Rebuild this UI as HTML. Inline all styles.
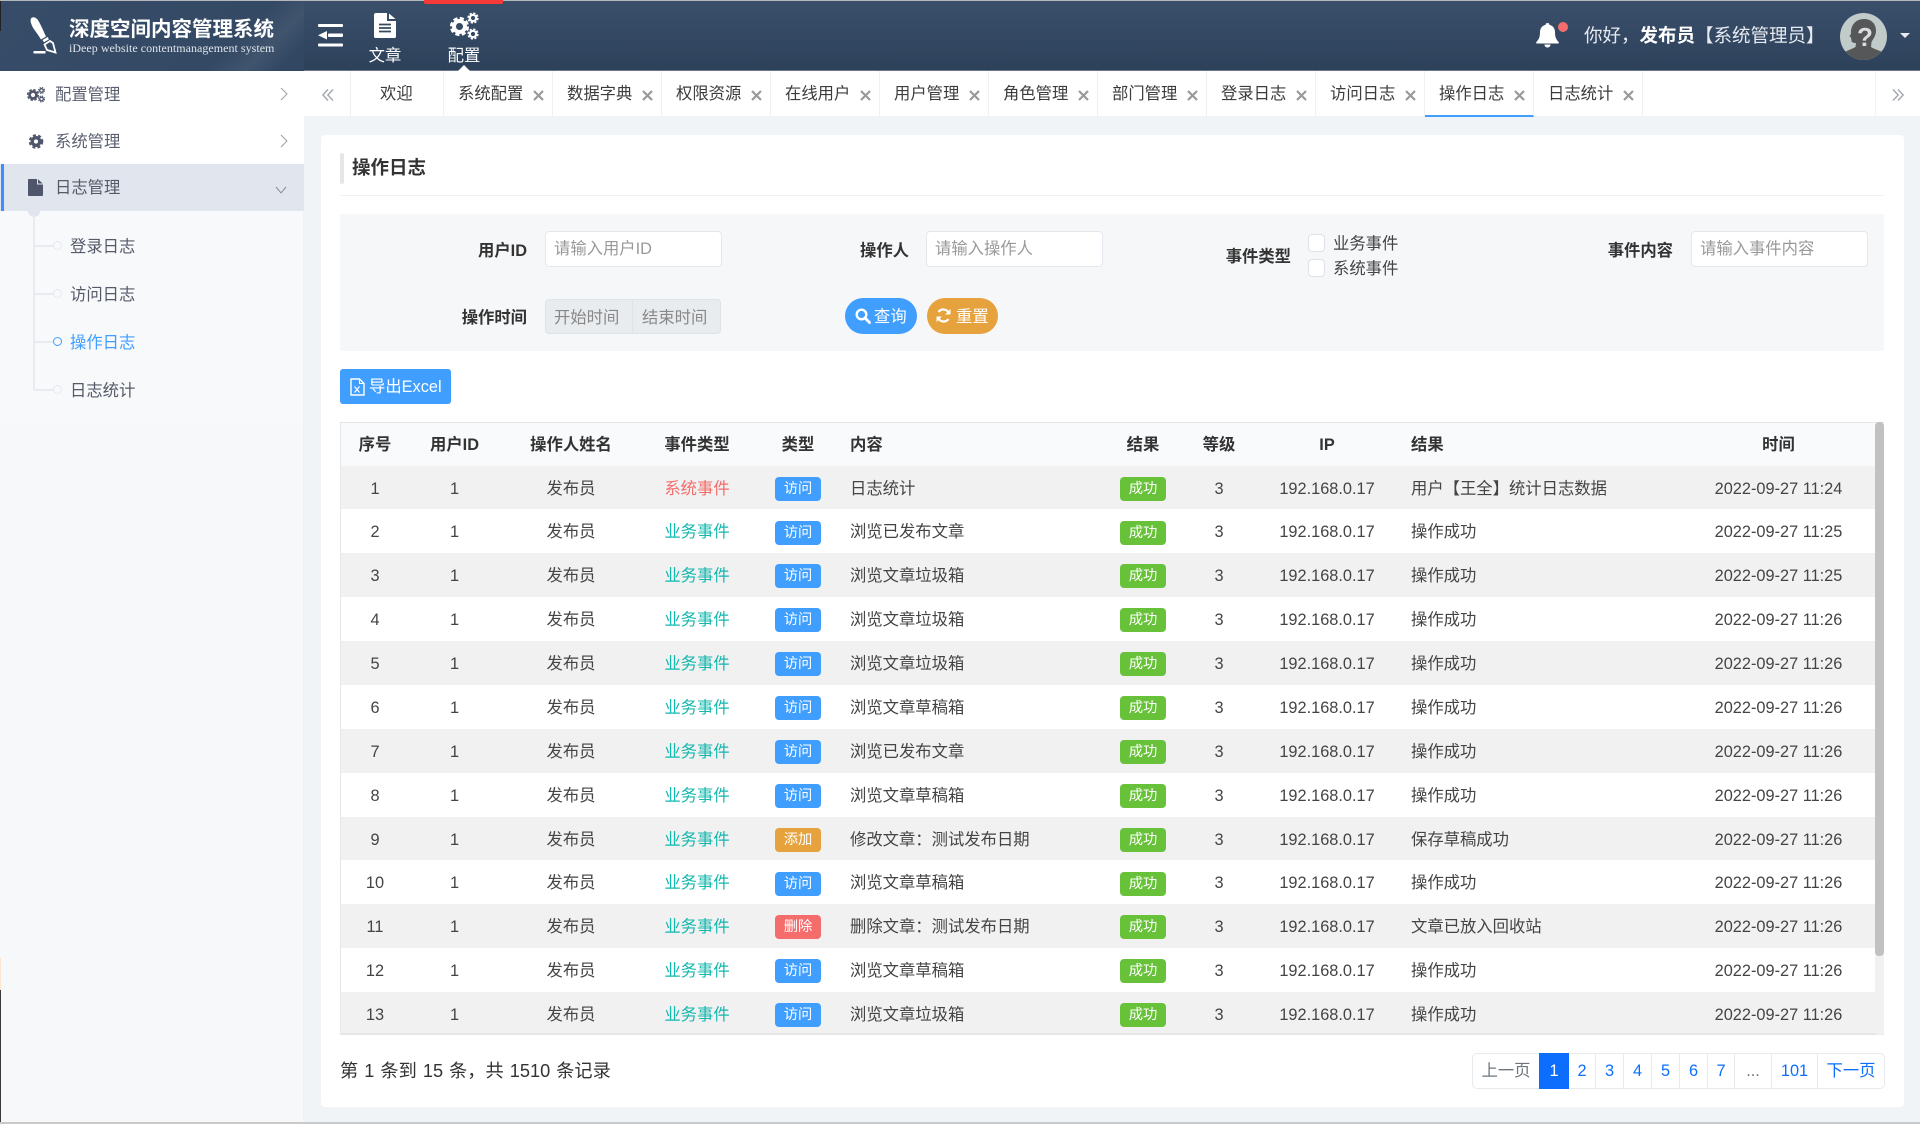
<!DOCTYPE html>
<html lang="zh">
<head>
<meta charset="utf-8">
<title>操作日志</title>
<style>
*{box-sizing:border-box;margin:0;padding:0}
html,body{width:1920px;height:1124px;overflow:hidden;background:#f1f4f7}
body{position:relative;font:16.33px/1.2 "Liberation Sans","Noto Sans CJK SC",sans-serif;color:#444}
.a{position:absolute;white-space:nowrap}
svg{position:absolute;display:block;overflow:visible}
#hd{left:0;top:0;width:1920px;height:71px;background:linear-gradient(#3a4f6a,#2d415b);border-top:1px solid #b5b8bb;border-bottom:1px solid #6b7788}
#logo{left:0;top:0;width:304px;height:70px;background:linear-gradient(135deg,#374c68 0%,#344964 74%,#40546e 84%,#324762 93%)}
.nav{color:#fff;width:60px;text-align:center;top:46px;line-height:20px}
#side{left:0;top:71px;width:304px;height:1052px;background:#f6f8fa;border-right:1px solid #f0f2f5}
.mi{left:0;width:304px;height:47px;line-height:49px;padding-left:55px;color:#5b6070;background:#fff}
.sub{left:70px;line-height:24px;color:#555a68}
.ln{position:absolute;background:#e8ebf1}
.dot{position:absolute;left:53px;width:9px;height:9px;border-radius:50%;background:#f8f9fb;border:1px solid #e5e8ee}
#tabs{left:304px;top:71px;width:1616px;height:46px;background:#fff;border-bottom:1px solid #f0f2f5}
.tab{top:71px;height:46px;width:109px;border-right:1px solid #eef0f3;line-height:47px;padding-left:14px;color:#3c3c3c}
.tab svg{left:89px;top:19px}
#card{left:321px;top:135px;width:1583px;height:972px;background:#fff;border-radius:4px}
.lb{font-weight:700;color:#333;text-align:right;line-height:24px}
.ip{height:36px;width:177px;background:#fff;border:1px solid #e4e7ed;border-radius:4px;line-height:35px;padding-left:8px;color:#999}
.cb{left:1308px;width:17px;height:18px;border:1px solid #dfe2e7;border-radius:4px;background:#fff}
.btn{color:#fff;line-height:38px}
#tb{left:340px;top:422px;width:1544px;height:613px;overflow:hidden;border:1px solid #e5e6ea;border-right:0;border-bottom:2px solid #e5e6e8;background:#fff}
.r{position:absolute;left:0;width:1534px;height:43.88px;line-height:46px;display:grid;grid-template-columns:68px 91px 142px 110px 92px 256px 86px 66px 150px 280px 193px}
.r>span{text-align:center;white-space:nowrap;display:block}
.r>.l{text-align:left}
.r .c6{padding-left:6px}
.r .c10{padding-left:9px}
.th{top:0;height:43px;background:#f9fafb;font-weight:700;color:#333;line-height:44px}
.o{background:#f1f1f1}
.w{background:#fff}
.bz{color:#14b8ae}
.xt{color:#f56c6c}
i.t{font-style:normal;display:inline-block;width:46px;height:24px;line-height:24px;border-radius:4px;font-size:14.3px;color:#fff;vertical-align:middle;margin-top:-1px}
.bl{background:#409eff}.gr{background:#67c23a}.or{background:#e6a23c}.rd{background:#f56c6c}
#pg{left:1472px;top:1053px;width:413px;height:36px;border:1px solid #e7eaee;border-radius:5px;background:#fff}
.p{top:1054px;height:34px;line-height:35px;text-align:center;color:#0d6efd;border-right:1px solid #e7eaee}
</style>
</head>
<body>
<svg width="0" height="0" style="position:absolute"><defs>
<symbol id="x" viewBox="0 0 11 11"><path d="M1 1L10 10M10 1L1 10" stroke="#999" stroke-width="2.2" fill="none"/></symbol>
</defs></svg>

<div class="a" id="hd"></div>
<div class="a" id="logo" style="top:1px"></div>
<div class="a" style="left:0;top:1px;width:1px;height:30px;background:#222"></div>

<!-- logo -->
<svg style="left:0;top:0" width="70" height="70" viewBox="0 0 70 70">
<path d="M31 18.5c2-2.500 5.500-1 7.500 2.500 3.500 6 5.500 11.500 7.500 15.500l-5 3C38 34 33 29 31.500 24.500c-.6-2-1.500-4-.5-6z" fill="#fff"/>
<path d="M42.500 40l5-3 1.500 2.200-5 3z" fill="#fff"/>
<path d="M44.500 44.500l5.500-3.500 3 2 2.500 9.500-8.500-2.500z" fill="none" stroke="#fff" stroke-width="1.800"/>
<path d="M33.500 51h12v2.500h-12z" fill="#fff"/>
</svg>
<div class="a" style="left:69px;top:17px;font-size:20.500px;font-weight:700;color:#fff;line-height:26px">深度空间内容管理系统</div>
<div class="a" style="left:69px;top:41px;font:12px/14px 'Liberation Serif',serif;color:#dfe4ea;letter-spacing:.03px">iDeep website contentmanagement system</div>

<!-- outdent -->
<svg style="left:318px;top:24px" width="25" height="23" viewBox="0 0 25 23">
<rect x="0" y="0" width="25" height="3" rx="1" fill="#fff"/><rect x="10" y="9.500" width="15" height="3.500" rx="1" fill="#fff"/><rect x="0" y="19.500" width="25" height="3" rx="1" fill="#fff"/><path d="M0 11.200L9 7v8.500z" fill="#fff"/>
</svg>
<!-- doc -->
<svg style="left:374px;top:13px" width="22" height="25" viewBox="0 0 22 25">
<path d="M2 0h11v8h9v15.500a1.500 1.500 0 0 1-1.500 1.500H1.500A1.500 1.500 0 0 1 0 23.500V2a2 2 0 0 1 2-2zM15 .5L21.500 6H15z" fill="#fff"/>
<path d="M5 11.500h12M5 15h12M5 18.500h12" stroke="#34485f" stroke-width="1.700"/>
</svg>
<!-- gears -->
<svg style="left:450px;top:12px" width="29" height="30" viewBox="0 0 29 30">
<circle cx="9.500" cy="14.500" r="5.500" fill="none" stroke="#fff" stroke-width="4"/><circle cx="9.500" cy="14.500" r="8.400" fill="none" stroke="#fff" stroke-width="2.400" stroke-dasharray="4.200 2.400"/>
<circle cx="23" cy="6" r="3.200" fill="none" stroke="#fff" stroke-width="2.200"/><circle cx="23" cy="6" r="4.900" fill="none" stroke="#fff" stroke-width="1.500" stroke-dasharray="2.300 1.550"/>
<circle cx="23" cy="22" r="3.200" fill="none" stroke="#fff" stroke-width="2.200"/><circle cx="23" cy="22" r="4.900" fill="none" stroke="#fff" stroke-width="1.500" stroke-dasharray="2.300 1.550"/>
</svg>
<div class="a nav" style="left:355px">文章</div>
<div class="a nav" style="left:434px">配置</div>
<div class="a" style="left:424px;top:0;width:79px;height:4px;background:#f63a3a;border-radius:0 0 2px 2px"></div>
<svg style="left:458px;top:65px" width="12" height="6"><path d="M0 6L6 0l6 6z" fill="#fff"/></svg>

<!-- bell -->
<svg style="left:1536px;top:23px" width="23" height="25" viewBox="0 0 23 25">
<path d="M11.500 0c1.200 0 2 .8 2 1.900 3.500.8 5.500 3.600 5.500 7.300 0 5.300 1.600 7.700 3.700 9.800v1.500H.3V19c2.100-2.100 3.700-4.500 3.700-9.800 0-3.700 2-6.500 5.500-7.300C9.500.8 10.300 0 11.500 0zM8.500 21.500h6c0 1.800-1.300 3-3 3s-3-1.200-3-3z" fill="#fff"/>
</svg>
<div class="a" style="left:1558px;top:22px;width:10px;height:10px;border-radius:50%;background:#f56c6c"></div>
<div class="a" style="left:1584px;top:25px;font-size:18.500px;line-height:22px;color:#e6eaf0">你好，<b style="color:#fff">发布员</b>【系统管理员】</div>
<!-- avatar -->
<svg style="left:1840px;top:13px" width="47" height="47" viewBox="0 0 47 47">
<defs><clipPath id="cp"><circle cx="23.500" cy="23.500" r="23.500"/></clipPath></defs>
<g clip-path="url(#cp)"><rect width="47" height="47" fill="#c1cbca"/>
<path d="M24 6c7.500 0 12 5 12 11.500 0 5.500-3 8.500-4.500 11.500l-.5 5c4 3 11 3.500 16 8v6H0v-6c5-4 11-5.500 15.500-8l.5-4c-2.500 0-4.500-.5-4.500-2.500l-.5-3-1.500-1 1.500-3c-.5-8 4.500-14.500 13-14.500z" fill="#565759"/>
<text x="25" y="33" font-family="Liberation Sans" font-weight="700" font-size="26" text-anchor="middle" fill="#d9dedd">?</text></g>
</svg>
<svg style="left:1900px;top:33px" width="10" height="5"><path d="M0 0h10L5 5z" fill="#e8ecf0"/></svg>

<!-- sidebar -->
<div class="a" id="side"></div>
<div class="a" style="left:0;top:211px;width:303px;height:214px;background:#f8f9fb"></div>
<div class="a mi" style="top:71px">配置管理</div>
<div class="a mi" style="top:118px">系统管理</div>
<div class="a mi" style="top:164px;background:#e1e5ed;color:#555a68">日志管理</div>
<div class="a" style="left:1px;top:164px;width:3px;height:47px;background:#3c8dff"></div>
<svg style="left:27px;top:87px" width="18" height="15" viewBox="0 0 18 15" fill="none">
<circle cx="6" cy="8" r="3.400" stroke="#4f566b" stroke-width="2.600"/><circle cx="6" cy="8" r="5.300" stroke="#4f566b" stroke-width="1.500" stroke-dasharray="2.600 1.570"/>
<circle cx="14.500" cy="3.500" r="1.800" stroke="#4f566b" stroke-width="1.300"/><circle cx="14.500" cy="3.500" r="3" stroke="#4f566b" stroke-width="1" stroke-dasharray="1.400 .95"/>
<circle cx="14.500" cy="12" r="1.800" stroke="#4f566b" stroke-width="1.300"/><circle cx="14.500" cy="12" r="3" stroke="#4f566b" stroke-width="1" stroke-dasharray="1.400 .95"/>
</svg>
<svg style="left:28px;top:134px" width="16" height="15" viewBox="0 0 16 15" fill="none">
<circle cx="8" cy="7.500" r="3.800" stroke="#4f566b" stroke-width="3.400"/><circle cx="8" cy="7.500" r="6.300" stroke="#4f566b" stroke-width="2" stroke-dasharray="3 2.280"/>
</svg>
<svg style="left:28px;top:179px" width="15" height="17" viewBox="0 0 15 17">
<path d="M1 0h8v5.500h6V16a1 1 0 0 1-1 1H1a1 1 0 0 1-1-1V1a1 1 0 0 1 1-1zM10 .3L14.700 4.500H10z" fill="#4f566b"/>
</svg>
<svg style="left:280px;top:87px" width="8" height="14" fill="none"><path d="M1 1l6 6-6 6" stroke="#9a9ea6" stroke-width="1"/></svg>
<svg style="left:280px;top:134px" width="8" height="14" fill="none"><path d="M1 1l6 6-6 6" stroke="#9a9ea6" stroke-width="1"/></svg>
<svg style="left:275px;top:186px" width="12" height="8" fill="none"><path d="M1 1l5 6 5-6" stroke="#8a8f98" stroke-width="1"/></svg>
<div class="a" style="left:28px;top:211px;width:12px;height:6px;background:#e1e5ed;border-radius:0 0 6px 6px"></div>
<div class="ln" style="left:33px;top:215px;width:2px;height:175px"></div>
<div class="ln" style="left:33px;top:245px;width:20px;height:2px"></div>
<div class="ln" style="left:33px;top:293px;width:20px;height:2px"></div>
<div class="ln" style="left:33px;top:341px;width:20px;height:2px"></div>
<div class="ln" style="left:33px;top:389px;width:20px;height:2px"></div>
<div class="dot" style="top:241px"></div>
<div class="dot" style="top:289px"></div>
<div class="dot" style="top:337px;border-color:#409eff"></div>
<div class="dot" style="top:385px"></div>
<div class="a sub" style="top:235px">登录日志</div>
<div class="a sub" style="top:283px">访问日志</div>
<div class="a sub" style="top:331px;color:#409eff">操作日志</div>
<div class="a sub" style="top:379px">日志统计</div>
<div class="a" style="left:0;top:958px;width:1px;height:32px;background:#fde6cf"></div>
<div class="a" style="left:0;top:990px;width:1px;height:132px;background:#3a3a3a"></div>

<!-- tabs -->
<div class="a" id="tabs"></div>
<div class="a" style="left:304px;top:71px;width:47px;height:46px;border-right:1px solid #eef0f3"></div>
<svg style="left:322px;top:89px" width="12" height="12" fill="none"><path d="M6 .5L.8 6 6 11.500M11 .5L5.800 6 11 11.500" stroke="#a0a4ab" stroke-width="1.300"/></svg>
<div class="a" style="left:1875px;top:71px;width:45px;height:46px;border-left:1px solid #f2f3f6"></div>
<svg style="left:1892px;top:89px" width="12" height="12" fill="none"><path d="M1 .5L6.200 6 1 11.500M6 .5L11.200 6 6 11.500" stroke="#a0a4ab" stroke-width="1.300"/></svg>
<div class="a tab" style="left:351px;width:93px;padding-left:29px">欢迎</div>
<div class="a tab" style="left:444px">系统配置<svg width="11" height="11"><use href="#x"/></svg></div>
<div class="a tab" style="left:553px">数据字典<svg width="11" height="11"><use href="#x"/></svg></div>
<div class="a tab" style="left:662px">权限资源<svg width="11" height="11"><use href="#x"/></svg></div>
<div class="a tab" style="left:771px">在线用户<svg width="11" height="11"><use href="#x"/></svg></div>
<div class="a tab" style="left:880px">用户管理<svg width="11" height="11"><use href="#x"/></svg></div>
<div class="a tab" style="left:989px">角色管理<svg width="11" height="11"><use href="#x"/></svg></div>
<div class="a tab" style="left:1098px">部门管理<svg width="11" height="11"><use href="#x"/></svg></div>
<div class="a tab" style="left:1207px">登录日志<svg width="11" height="11"><use href="#x"/></svg></div>
<div class="a tab" style="left:1316px">访问日志<svg width="11" height="11"><use href="#x"/></svg></div>
<div class="a tab" style="left:1425px;border-bottom:2px solid #409eff">操作日志<svg width="11" height="11"><use href="#x"/></svg></div>
<div class="a tab" style="left:1534px">日志统计<svg width="11" height="11"><use href="#x"/></svg></div>

<!-- card -->
<div class="a" id="card"></div>
<div class="a" style="left:340px;top:153px;width:4px;height:31px;background:#e5e6e8;border-radius:2px"></div>
<div class="a" style="left:352px;top:156px;font-size:18.500px;font-weight:700;color:#333;line-height:24px">操作日志</div>
<div class="a" style="left:340px;top:195px;width:1544px;height:1px;background:#eef0f2"></div>
<div class="a" style="left:340px;top:214px;width:1544px;height:137px;background:#f6f7f9"></div>

<div class="a lb" style="left:427px;width:100px;top:239px">用户ID</div>
<div class="a ip" style="left:545px;top:231px">请输入用户ID</div>
<div class="a lb" style="left:809px;width:100px;top:239px">操作人</div>
<div class="a ip" style="left:926px;top:231px">请输入操作人</div>
<div class="a lb" style="left:1191px;width:100px;top:245px">事件类型</div>
<div class="a cb" style="top:234px"></div>
<div class="a cb" style="top:259px"></div>
<div class="a" style="left:1333px;top:232px;line-height:24px">业务事件</div>
<div class="a" style="left:1333px;top:257px;line-height:24px">系统事件</div>
<div class="a lb" style="left:1573px;width:100px;top:239px">事件内容</div>
<div class="a ip" style="left:1691px;top:231px">请输入事件内容</div>

<div class="a lb" style="left:427px;width:100px;top:306px">操作时间</div>
<div class="a" style="left:545px;top:299px;width:176px;height:35px;background:#e9ecef;border:1px solid #dfe2e6;border-radius:4px"></div>
<div class="a" style="left:632px;top:299px;width:1px;height:35px;background:#dfe2e6"></div>
<div class="a" style="left:554px;top:306px;line-height:24px;color:#888">开始时间</div>
<div class="a" style="left:642px;top:306px;line-height:24px;color:#888">结束时间</div>

<div class="a btn" style="left:845px;top:298px;width:72px;height:36px;border-radius:18px;background:#409eff;padding-left:29px">查询</div>
<svg style="left:855px;top:308px" width="16" height="16" fill="none"><circle cx="6.500" cy="6.500" r="4.800" stroke="#fff" stroke-width="2.400"/><path d="M10 10l4.500 4.500" stroke="#fff" stroke-width="2.800" stroke-linecap="round"/></svg>
<div class="a btn" style="left:927px;top:298px;width:71px;height:36px;border-radius:18px;background:#e6a23c;padding-left:29px">重置</div>
<svg style="left:936px;top:308px" width="15" height="15" viewBox="0 0 15 15" fill="none"><path d="M13 5.500A6 6 0 0 0 2.500 4M2 9.500A6 6 0 0 0 12.500 11" stroke="#fff" stroke-width="2.200"/><path d="M14.500 1v5.500H9zM.5 14V8.500H6z" fill="#fff"/></svg>

<div class="a btn" style="left:340px;top:369px;width:111px;height:35px;border-radius:3px;background:#409eff;padding-left:29px;line-height:36px">导出Excel</div>
<svg style="left:350px;top:378px" width="15" height="18" viewBox="0 0 15 18" fill="none"><path d="M1 1h8.500L14 5.500V17H1z" stroke="#fff" stroke-width="1.400"/><path d="M9.500 1v4.500H14" stroke="#fff" stroke-width="1"/><path d="M4.500 8.500l5 6M9.500 8.500l-5 6" stroke="#fff" stroke-width="1.200"/></svg>

<!-- table -->
<div class="a" id="tb">
<div class="r th"><span>序号</span><span>用户ID</span><span>操作人姓名</span><span>事件类型</span><span>类型</span><span class="l c6">内容</span><span>结果</span><span>等级</span><span>IP</span><span class="l c10">结果</span><span>时间</span></div>
<div class="r o" style="top:42.500px"><span>1</span><span>1</span><span>发布员</span><span class="xt">系统事件</span><span><i class="t bl">访问</i></span><span class="l c6">日志统计</span><span><i class="t gr">成功</i></span><span>3</span><span>192.168.0.17</span><span class="l c10">用户【王全】统计日志数据</span><span>2022-09-27 11:24</span></div>
<div class="r w" style="top:86.380px"><span>2</span><span>1</span><span>发布员</span><span class="bz">业务事件</span><span><i class="t bl">访问</i></span><span class="l c6">浏览已发布文章</span><span><i class="t gr">成功</i></span><span>3</span><span>192.168.0.17</span><span class="l c10">操作成功</span><span>2022-09-27 11:25</span></div>
<div class="r o" style="top:130.260px"><span>3</span><span>1</span><span>发布员</span><span class="bz">业务事件</span><span><i class="t bl">访问</i></span><span class="l c6">浏览文章垃圾箱</span><span><i class="t gr">成功</i></span><span>3</span><span>192.168.0.17</span><span class="l c10">操作成功</span><span>2022-09-27 11:25</span></div>
<div class="r w" style="top:174.140px"><span>4</span><span>1</span><span>发布员</span><span class="bz">业务事件</span><span><i class="t bl">访问</i></span><span class="l c6">浏览文章垃圾箱</span><span><i class="t gr">成功</i></span><span>3</span><span>192.168.0.17</span><span class="l c10">操作成功</span><span>2022-09-27 11:26</span></div>
<div class="r o" style="top:218.020px"><span>5</span><span>1</span><span>发布员</span><span class="bz">业务事件</span><span><i class="t bl">访问</i></span><span class="l c6">浏览文章垃圾箱</span><span><i class="t gr">成功</i></span><span>3</span><span>192.168.0.17</span><span class="l c10">操作成功</span><span>2022-09-27 11:26</span></div>
<div class="r w" style="top:261.900px"><span>6</span><span>1</span><span>发布员</span><span class="bz">业务事件</span><span><i class="t bl">访问</i></span><span class="l c6">浏览文章草稿箱</span><span><i class="t gr">成功</i></span><span>3</span><span>192.168.0.17</span><span class="l c10">操作成功</span><span>2022-09-27 11:26</span></div>
<div class="r o" style="top:305.780px"><span>7</span><span>1</span><span>发布员</span><span class="bz">业务事件</span><span><i class="t bl">访问</i></span><span class="l c6">浏览已发布文章</span><span><i class="t gr">成功</i></span><span>3</span><span>192.168.0.17</span><span class="l c10">操作成功</span><span>2022-09-27 11:26</span></div>
<div class="r w" style="top:349.660px"><span>8</span><span>1</span><span>发布员</span><span class="bz">业务事件</span><span><i class="t bl">访问</i></span><span class="l c6">浏览文章草稿箱</span><span><i class="t gr">成功</i></span><span>3</span><span>192.168.0.17</span><span class="l c10">操作成功</span><span>2022-09-27 11:26</span></div>
<div class="r o" style="top:393.540px"><span>9</span><span>1</span><span>发布员</span><span class="bz">业务事件</span><span><i class="t or">添加</i></span><span class="l c6">修改文章：测试发布日期</span><span><i class="t gr">成功</i></span><span>3</span><span>192.168.0.17</span><span class="l c10">保存草稿成功</span><span>2022-09-27 11:26</span></div>
<div class="r w" style="top:437.420px"><span>10</span><span>1</span><span>发布员</span><span class="bz">业务事件</span><span><i class="t bl">访问</i></span><span class="l c6">浏览文章草稿箱</span><span><i class="t gr">成功</i></span><span>3</span><span>192.168.0.17</span><span class="l c10">操作成功</span><span>2022-09-27 11:26</span></div>
<div class="r o" style="top:481.300px"><span>11</span><span>1</span><span>发布员</span><span class="bz">业务事件</span><span><i class="t rd">删除</i></span><span class="l c6">删除文章：测试发布日期</span><span><i class="t gr">成功</i></span><span>3</span><span>192.168.0.17</span><span class="l c10">文章已放入回收站</span><span>2022-09-27 11:26</span></div>
<div class="r w" style="top:525.180px"><span>12</span><span>1</span><span>发布员</span><span class="bz">业务事件</span><span><i class="t bl">访问</i></span><span class="l c6">浏览文章草稿箱</span><span><i class="t gr">成功</i></span><span>3</span><span>192.168.0.17</span><span class="l c10">操作成功</span><span>2022-09-27 11:26</span></div>
<div class="r o" style="top:569.060px"><span>13</span><span>1</span><span>发布员</span><span class="bz">业务事件</span><span><i class="t bl">访问</i></span><span class="l c6">浏览文章垃圾箱</span><span><i class="t gr">成功</i></span><span>3</span><span>192.168.0.17</span><span class="l c10">操作成功</span><span>2022-09-27 11:26</span></div>
</div>
<div class="a" style="left:1875px;top:422px;width:9px;height:613px;background:#f1f1f1;border-radius:4px"></div>
<div class="a" style="left:1875px;top:422px;width:9px;height:534px;background:#c1c1c1;border-radius:4px"></div>

<!-- footer -->
<div class="a" style="left:340px;top:1059px;font-size:18.200px;line-height:24px;color:#333;word-spacing:1px">第 1 条到 15 条，共 1510 条记录</div>
<div class="a" id="pg"></div>
<div class="a p" style="left:1473px;width:66px;color:#6c757d;border:0">上一页</div>
<div class="a p" style="left:1539px;top:1053px;height:36px;line-height:37px;width:30px;background:#0d6efd;color:#fff;border:0">1</div>
<div class="a p" style="left:1569px;width:27px">2</div>
<div class="a p" style="left:1596px;width:28px">3</div>
<div class="a p" style="left:1624px;width:28px">4</div>
<div class="a p" style="left:1652px;width:28px">5</div>
<div class="a p" style="left:1680px;width:28px">6</div>
<div class="a p" style="left:1708px;width:27px">7</div>
<div class="a p" style="left:1735px;width:37px;color:#6c757d">...</div>
<div class="a p" style="left:1772px;width:46px">101</div>
<div class="a p" style="left:1818px;width:66px;border:0">下一页</div>

<div class="a" style="left:0;top:1122px;width:1920px;height:2px;background:#c9c9c9"></div>
</body>
</html>
